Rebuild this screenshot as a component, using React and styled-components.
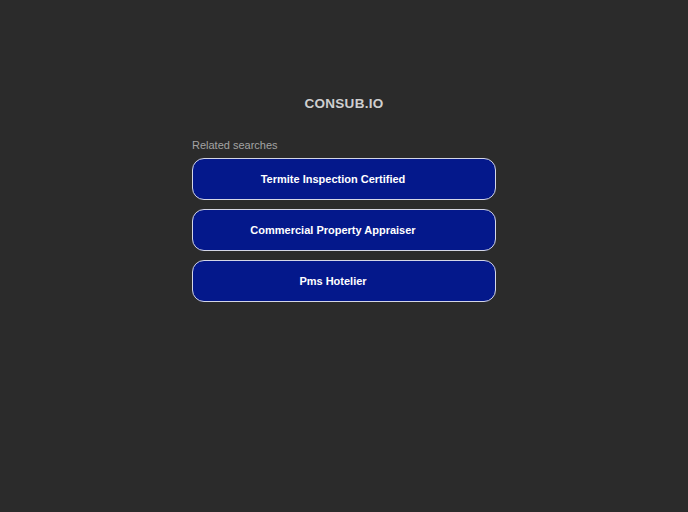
import styled, { createGlobalStyle } from "styled-components";

const GlobalStyle = createGlobalStyle`
    html, body {
        margin: 0;
        padding: 0;
        background-color: #2b2b2b;
        font-family: "Liberation Sans", Arial, sans-serif;
    }
`;

const Page = styled.div`
    display: flex;
    flex-direction: column;
    align-items: center;
    min-height: 512px;
    padding-top: 96px;
    box-sizing: border-box;
`;

const Domain = styled.h1`
    margin: 0;
    font-size: 13.5px;
    font-weight: bold;
    letter-spacing: 0.3px;
    color: #cfcfcf;
    line-height: 16px;
`;

const Searches = styled.div`
    width: 304px;
    margin-top: 26px;
    display: flex;
    flex-direction: column;
`;

const SearchesTitle = styled.div`
    font-size: 11px;
    color: #a3a3a3;
    line-height: 14px;
    margin-bottom: 6px;
`;

const SearchList = styled.div`
    display: flex;
    flex-direction: column;
    gap: 9px;
`;

const SearchLink = styled.a`
    display: flex;
    align-items: center;
    justify-content: center;
    height: 42px;
    box-sizing: border-box;
    padding-right: 22px;
    background-color: #04188b;
    border: 1px solid #d4d6e6;
    border-radius: 12px;
    color: #ffffff;
    font-size: 11px;
    font-weight: bold;
    text-decoration: none;
    cursor: pointer;
`;

const searches = [
    "Termite Inspection Certified",
    "Commercial Property Appraiser",
    "Pms Hotelier",
];

const App = () => {
    return (
        <>
            <GlobalStyle />
            <Page>
                <Domain>CONSUB.IO</Domain>
                <Searches>
                    <SearchesTitle>Related searches</SearchesTitle>
                    <SearchList>
                        {searches.map((term) => (
                            <SearchLink key={term}>{term}</SearchLink>
                        ))}
                    </SearchList>
                </Searches>
            </Page>
        </>
    );
};

export default App;
